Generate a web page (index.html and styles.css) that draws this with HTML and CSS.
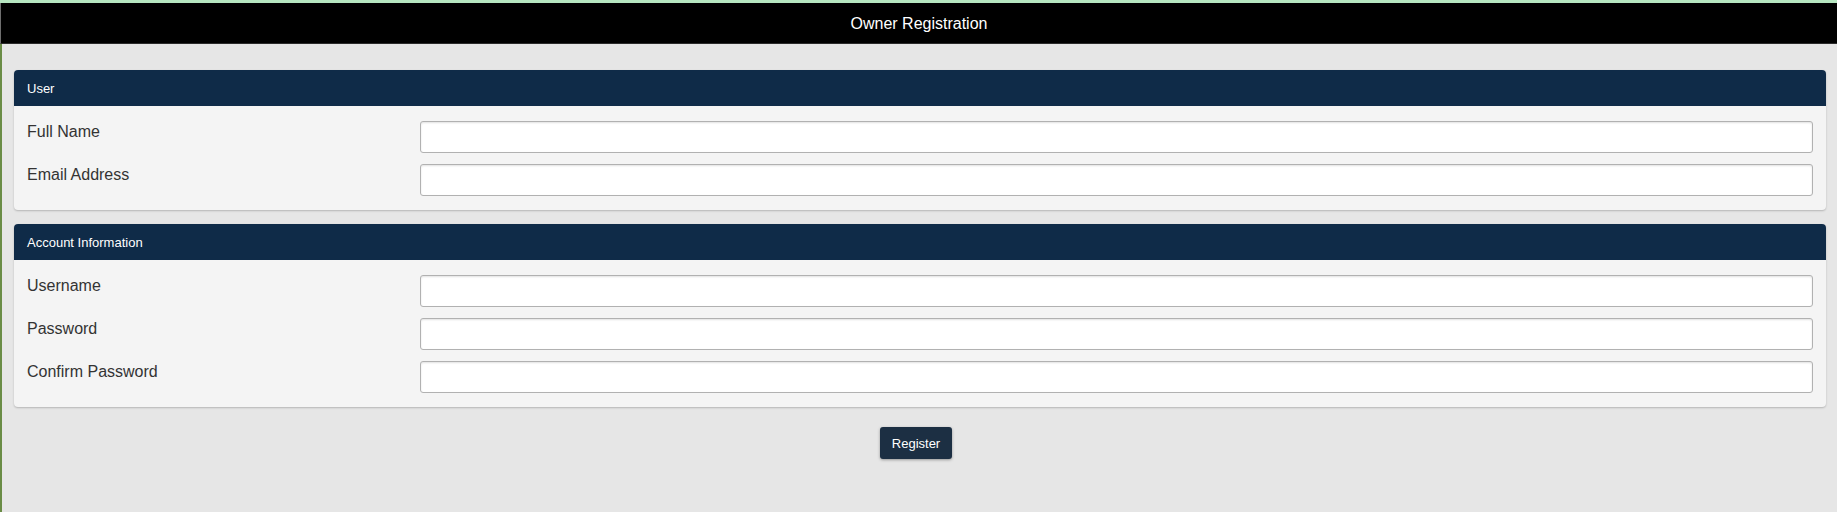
FILE: index.html
```html
<!DOCTYPE html>
<html lang="en">

<head>
	<meta charset="UTF-8">
	<title>Owner Registration</title>
	<link rel="stylesheet" href="styles.css">
</head>

<body>
<div class="title-bar">Owner Registration</div>
<div class="content">
	<form class="reg-form">
		<div class="panel">
			<div class="panel-heading">User</div>
			<div class="panel-body">
				<div class="row">
					<label for="fullname">Full Name</label>
					<input type="text" id="fullname">
				</div>
				<div class="row">
					<label for="email">Email Address</label>
					<input type="email" id="email">
				</div>
			</div>
		</div>
		<div class="panel">
			<div class="panel-heading">Account Information</div>
			<div class="panel-body">
				<div class="row">
					<label for="username">Username</label>
					<input type="text" id="username">
				</div>
				<div class="row">
					<label for="password">Password</label>
					<input type="password" id="password">
				</div>
				<div class="row">
					<label for="confirm">Confirm Password</label>
					<input type="password" id="confirm">
				</div>
			</div>
		</div>
		<div class="actions">
			<button type="button" class="btn">Register</button>
		</div>
	</form>
</div>
</body>

</html>
```

FILE: styles.css
```css
* {
	padding: 0;
	margin: 0;
	box-sizing: border-box;
}

html,
body {
	height: 100%;
}

body {
	font-family: "Liberation Sans", Arial, sans-serif;
	background: #e6e6e6;
	border-top: 3px solid #b6e6c0;
	display: flex;
	flex-direction: column;
}

.title-bar {
	height: 41px;
	line-height: 41px;
	background: #000;
	border-bottom: 1px solid #2b2b2b;
	border-left: 1px solid #6e6e6e;
	color: #fff;
	font-size: 16px;
	text-align: center;
}

.content {
	flex: 1;
	border-left: 2px solid #6a8c46;
	padding: 26px 11px 0 12px;
}

.panel {
	background: #f4f4f4;
	border-radius: 4px;
	box-shadow: 0 1px 2px rgba(0, 0, 0, 0.22);
	margin-bottom: 14px;
}

.panel-heading {
	height: 36px;
	line-height: 37px;
	padding: 0 13px;
	background: #0f2b48;
	color: #fff;
	font-size: 13px;
	border-radius: 4px 4px 0 0;
}

.panel-body {
	padding: 15px 13px 14px;
	display: flex;
	flex-direction: column;
	gap: 11px;
}

.row {
	display: grid;
	grid-template-columns: 393px 1fr;
	align-items: start;
}

.row label {
	padding-top: 1px;
	font-size: 16px;
	line-height: 20px;
	color: #333;
}

.row input {
	height: 32px;
	border: 1px solid #b1b1b1;
	border-radius: 3px;
	background: #fff;
	box-shadow: inset 0 1px 2px rgba(0, 0, 0, 0.12);
	outline: none;
}

.actions {
	display: flex;
	justify-content: center;
	padding: 6px 8px 0 0;
}

.btn {
	width: 72px;
	height: 32px;
	border: 0;
	border-radius: 3px;
	background: #1c2f43;
	color: #fff;
	font-family: "Liberation Sans", Arial, sans-serif;
	font-size: 13px;
	box-shadow: 0 1px 3px rgba(0, 0, 0, 0.35);
	cursor: pointer;
}
```
